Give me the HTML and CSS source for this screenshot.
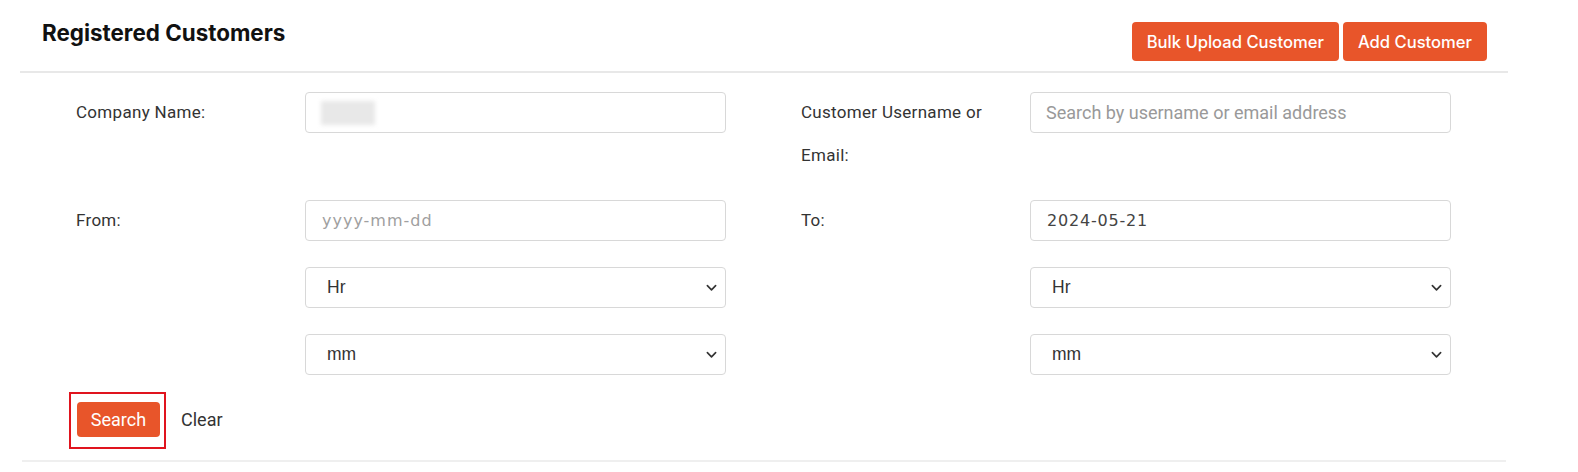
FILE: index.html
```html
<!DOCTYPE html>
<html>
<head>
<meta charset="utf-8">
<link rel="stylesheet" href="styles.css">
</head>
<body>
<div class="card">
  <div class="header">
    <h1 class="title">Registered Customers</h1>
    <div class="actions">
      <button class="btn">Bulk Upload Customer</button>
      <button class="btn">Add Customer</button>
    </div>
  </div>
  <div class="form">
    <div class="row">
      <label class="label">Company Name:</label>
      <div class="fields">
        <div class="input"><span class="blur"></span></div>
      </div>
      <div class="spacer"></div>
      <label class="label">Customer Username or Email:</label>
      <div class="fields">
        <div class="input placeholder sans">Search by username or email address</div>
      </div>
    </div>
    <div class="row">
      <label class="label">From:</label>
      <div class="fields">
        <div class="input date placeholder">yyyy-mm-dd</div>
        <div class="input select">Hr<svg class="chev" viewBox="0 0 12 8"><path d="M1.5 1.5 6 6l4.5-4.5" fill="none" stroke="#333" stroke-width="1.8" stroke-linecap="round" stroke-linejoin="round"/></svg></div>
        <div class="input select">mm<svg class="chev" viewBox="0 0 12 8"><path d="M1.5 1.5 6 6l4.5-4.5" fill="none" stroke="#333" stroke-width="1.8" stroke-linecap="round" stroke-linejoin="round"/></svg></div>
      </div>
      <div class="spacer"></div>
      <label class="label">To:</label>
      <div class="fields">
        <div class="input date">2024-05-21</div>
        <div class="input select">Hr<svg class="chev" viewBox="0 0 12 8"><path d="M1.5 1.5 6 6l4.5-4.5" fill="none" stroke="#333" stroke-width="1.8" stroke-linecap="round" stroke-linejoin="round"/></svg></div>
        <div class="input select">mm<svg class="chev" viewBox="0 0 12 8"><path d="M1.5 1.5 6 6l4.5-4.5" fill="none" stroke="#333" stroke-width="1.8" stroke-linecap="round" stroke-linejoin="round"/></svg></div>
      </div>
    </div>
    <div class="buttons">
      <div class="highlight"><button class="btn btn-search">Search</button></div>
      <span class="clear">Clear</span>
    </div>
  </div>
  <div class="footer-line"></div>
</div>
</body>
</html>
```

FILE: styles.css
```css
* { box-sizing: border-box; }
body {
  margin: 0;
  background: #fff;
  font-family: Roboto, "Liberation Sans", sans-serif;
  color: #333;
}
.card {
  margin-left: 20px;
  width: 1488px;
}
.header {
  display: flex;
  justify-content: space-between;
  align-items: flex-start;
  padding: 22px 21px 10px 22px;
  border-bottom: 2px solid #e8e8e8;
}
.title {
  margin: 0;
  margin-top: -2px;
  font-family: Inter, "Liberation Sans", sans-serif;
  font-weight: 700;
  font-size: 22.4px;
  line-height: 26px;
  color: #111;
}
.actions {
  display: flex;
  gap: 4px;
}
.btn {
  background: #e8552a;
  color: #fff;
  border: none;
  border-radius: 4px;
  height: 39px;
  padding: 0 15px;
  font-family: Inter, "Liberation Sans", sans-serif;
  font-weight: 500;
  font-size: 16.6px;
  cursor: pointer;
}
.form {
  padding-left: 56px;
  padding-top: 19px;
}
.row {
  display: grid;
  grid-template-columns: 229px 421px 75px 229px 421px;
  margin-bottom: 23px;
}
.label {
  font-size: 17px;
  letter-spacing: 0.3px;
  line-height: 43px;
  margin-top: -1px;
  color: #333;
}
.fields {
  display: flex;
  flex-direction: column;
  gap: 26px;
}
.input {
  height: 41px;
  border: 1px solid #d8d8d8;
  border-radius: 4px;
  padding-left: 15px;
  display: flex;
  align-items: center;
  font-size: 17px;
  color: #444;
}
.placeholder { color: #9a9a9a; }
.placeholder.sans {
  font-family: Roboto, "Liberation Sans", sans-serif;
  font-size: 18px;
  color: #999;
}
.date {
  font-family: "DejaVu Sans", "Liberation Sans", sans-serif;
  font-size: 16px;
  letter-spacing: 0.8px;
  padding-left: 16px;
  color: #444;
}
.date.placeholder { color: #a0a0a0; letter-spacing: 1px; }
.select {
  font-family: "Liberation Sans", Arial, sans-serif;
  font-size: 17.5px;
  padding-left: 21px;
  padding-right: 8px;
  color: #333;
  justify-content: space-between;
}
.chev {
  width: 11px;
  height: 8px;
}
.blur {
  width: 54px;
  height: 24px;
  background: #e8e8e8;
  filter: blur(2px);
}
.buttons {
  display: flex;
  align-items: center;
  margin-left: -7px;
  margin-top: -6px;
}
.highlight {
  border: 2px solid #e0141e;
  padding: 8px 4px 10px 6px;
}
.btn-search {
  height: 35px;
  width: 83px;
  padding: 0;
  font-family: Roboto, "Liberation Sans", sans-serif;
  font-weight: 400;
  font-size: 18px;
}
.clear {
  margin-left: 15px;
  margin-top: -2px;
  font-size: 18px;
  color: #333;
}
.footer-line {
  margin-top: 11px;
  margin-left: 2px;
  width: 1484px;
  border-top: 2px solid #efefef;
}
```
